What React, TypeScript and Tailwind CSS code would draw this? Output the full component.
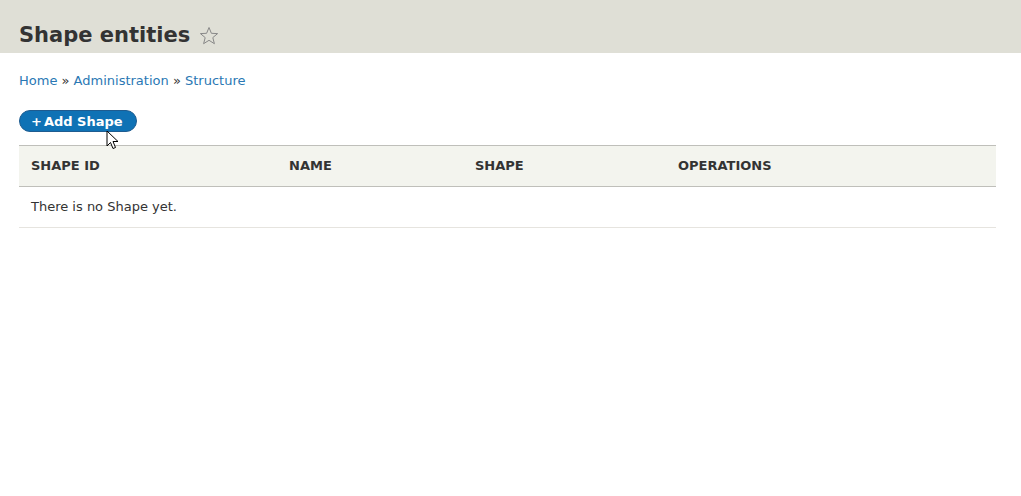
import React from "react";

export default function App() {
  return (
    <div className="relative min-h-[496px] bg-white text-[#333]" style={{ fontFamily: '"DejaVu Sans", sans-serif' }}>
      <div className="h-[53px] bg-[#dfdfd6] pl-[19px] flex items-end pb-[7px]">
        <h1 className="text-[21px] font-bold leading-none text-[#333] flex items-center gap-[9px]">
          Shape entities
          <svg width="20" height="20" viewBox="0 0 20 20" className="mt-[1px]">
            <path d="M10 1.5 L12.4 7.3 L18.6 7.6 L13.8 11.6 L15.4 17.7 L10 14.3 L4.6 17.7 L6.2 11.6 L1.4 7.6 L7.6 7.3 Z" fill="none" stroke="#888" strokeWidth="1" strokeLinejoin="miter" />
          </svg>
        </h1>
      </div>
      <div className="px-[19px]">
        <div className="mt-[20px] text-[13px] leading-[16px] text-[#333]">
          <a className="text-[#2a78b4]">Home</a> » <a className="text-[#2a78b4]">Administration</a> » <a className="text-[#2a78b4]">Structure</a>
        </div>
        <div className="mt-[21px] flex">
          <span className="h-[22px] pl-[11px] pr-[13px] rounded-full bg-[#0f72b5] border border-[#1e5c90] text-white text-[13px] font-bold flex items-center leading-none">
            <span className="mr-[2px]">+</span>Add Shape
          </span>
        </div>
        <table className="mt-[13px] w-[977px] border-collapse text-[13px]">
          <thead>
            <tr className="bg-[#f3f4ee] border-t border-b border-[#bfbfba] h-[41px]">
              <th className="w-[258px] text-left pl-[12px] text-[13px] font-bold uppercase text-[#333]">Shape ID</th>
              <th className="w-[186px] text-left pl-[12px] text-[13px] font-bold uppercase text-[#333]">Name</th>
              <th className="w-[203px] text-left pl-[12px] text-[13px] font-bold uppercase text-[#333]">Shape</th>
              <th className="text-left pl-[12px] text-[13px] font-bold uppercase text-[#333]">Operations</th>
            </tr>
          </thead>
          <tbody>
            <tr className="border-b border-[#e6e4df] h-[41px]">
              <td colSpan={4} className="pl-[12px] text-[13px] text-[#333]">There is no Shape yet.</td>
            </tr>
          </tbody>
        </table>
      </div>
      <svg className="absolute left-[106px] top-[130px]" width="14" height="20" viewBox="0 0 14 20">
        <path d="M1 1 L1 16 L4.5 12.5 L7 18.5 L9.5 17.5 L7 11.5 L12 11.5 Z" fill="#fff" stroke="#000" strokeWidth="1" strokeLinejoin="round" />
      </svg>
    </div>
  );
}
